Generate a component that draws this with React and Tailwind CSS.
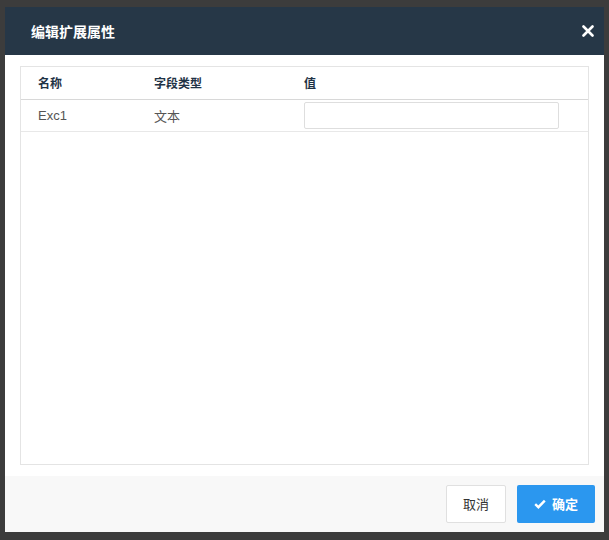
export default function App() {
  const f = { fontFamily: '"Noto Sans CJK SC", "Liberation Sans", sans-serif' };
  return (
    <div className="w-[609px] h-[540px] bg-[#3c3c3c] pt-[7px] pl-[5px]" style={f}>
      <div className="w-[599px] h-[525px] bg-white flex flex-col">
        <div className="h-[48px] bg-[#263747] flex items-center justify-between pl-[26px] pr-[10px]">
          <span className="text-white text-[14px] font-bold">编辑扩展属性</span>
          <svg width="12" height="12" viewBox="0 0 12 12"><path d="M1.5 1.5L10.5 10.5M10.5 1.5L1.5 10.5" stroke="white" strokeWidth="2.6" strokeLinecap="round"/></svg>
        </div>
        <div className="flex-1 px-[15px] pt-[11px] pb-[11px]">
          <div className="h-full border border-[#e4e4e4]">
            <div className="flex h-[33px] items-center border-b border-[#d8d8d8] text-[12px] font-bold text-[#1f3346]">
              <div className="w-[133px] pl-[17px]">名称</div>
              <div className="w-[150px]">字段类型</div>
              <div>值</div>
            </div>
            <div className="flex h-[32px] items-center border-b border-[#e8e8e8] text-[13px] text-[#555]">
              <div className="w-[133px] pl-[17px]" style={{fontFamily:'"Liberation Sans", sans-serif'}}>Exc1</div>
              <div className="w-[150px]">文本</div>
              <div className="w-[255px] h-[27px] border border-[#dedede] rounded-[2px]"></div>
            </div>
          </div>
        </div>
        <div className="h-[56px] bg-[#f8f8f8] flex items-center justify-end gap-[11px] pr-[9px]">
          <button className="w-[60px] h-[38px] bg-white border border-[#e0e0e0] rounded-[2px] text-[13px] text-[#333]">取消</button>
          <button className="w-[78px] h-[38px] bg-[#2b97ef] rounded-[2px] text-[13px] text-white font-bold flex items-center justify-center gap-[6px]">
            <svg width="12" height="10" viewBox="0 0 12 10"><path d="M1.2 5.2L4.4 8.2L10.8 1.6" stroke="white" strokeWidth="2.4" fill="none"/></svg>
            确定
          </button>
        </div>
      </div>
    </div>
  );
}
